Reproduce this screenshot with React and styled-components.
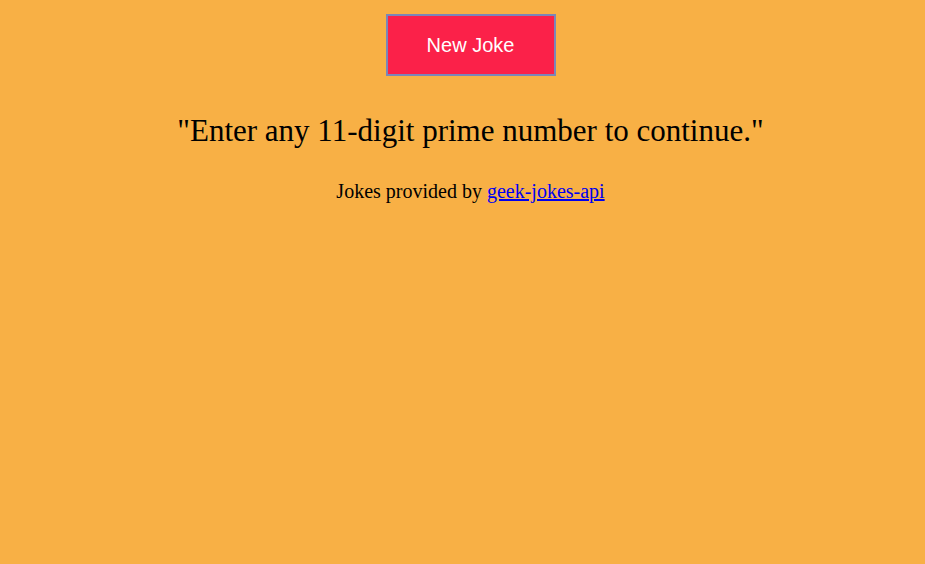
import styled, { createGlobalStyle } from "styled-components";

const GlobalStyle = createGlobalStyle`
  html, body {
    background: #f8b045;
  }
  body {
    margin: 8px;
    font-family: "Liberation Serif", "Times New Roman", serif;
  }
`;

const Page = styled.div`
  width: 100vw;
  display: flex;
  flex-direction: column;
  align-items: center;
  padding-top: 6px;
`;

const JokeButton = styled.button`
  width: 170px;
  height: 62px;
  background: #fb2149;
  color: #ffffff;
  border: 2px solid #7b86b8;
  font-family: "Liberation Sans", Arial, sans-serif;
  font-size: 20px;
  cursor: pointer;
`;

const Joke = styled.p`
  margin: 37px 0 0;
  font-size: 31px;
  text-align: center;
`;

const Credit = styled.p`
  margin: 31px 0 0;
  font-size: 20px;
`;

export default function App() {
  return (
    <>
      <GlobalStyle />
      <Page>
        <JokeButton>New Joke</JokeButton>
        <Joke>"Enter any 11-digit prime number to continue."</Joke>
        <Credit>
          Jokes provided by <a href="#">geek-jokes-api</a>
        </Credit>
      </Page>
    </>
  );
}
